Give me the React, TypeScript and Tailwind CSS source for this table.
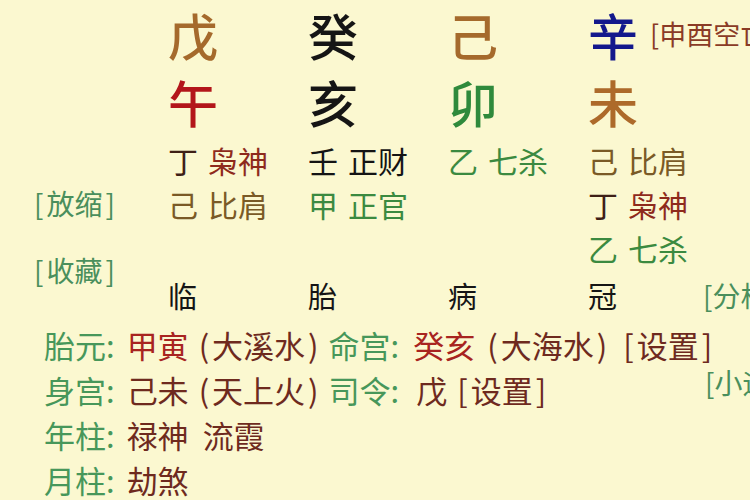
import React from 'react';

// 四柱列：天干、地支、藏干、长生
const columns = [
    { gan: '戊', ganColor: 'text-[#a56a2c]', zhi: '午', zhiColor: 'text-[#b3161a]', cs: '临' },
    { gan: '癸', ganColor: 'text-[#151515]', zhi: '亥', zhiColor: 'text-[#151515]', cs: '胎' },
    { gan: '己', ganColor: 'text-[#a56a2c]', zhi: '卯', zhiColor: 'text-[#2f8a3c]', cs: '病' },
    { gan: '辛', ganColor: 'text-[#13188c]', zhi: '未', zhiColor: 'text-[#ad6a2a]', cs: '冠' },
];

type Hidden = { stem: string; stemColor: string; god: string; godColor: string };

const hidden: Hidden[][] = [
    [
        { stem: '丁', stemColor: 'text-[#3e2016]', god: '枭神', godColor: 'text-[#8e2a1c]' },
        { stem: '己', stemColor: 'text-[#7a5a26]', god: '比肩', godColor: 'text-[#7a5a26]' },
    ],
    [
        { stem: '壬', stemColor: 'text-[#141414]', god: '正财', godColor: 'text-[#141414]' },
        { stem: '甲', stemColor: 'text-[#3b8a40]', god: '正官', godColor: 'text-[#3b8a40]' },
    ],
    [{ stem: '乙', stemColor: 'text-[#3b8a40]', god: '七杀', godColor: 'text-[#3b8a40]' }],
    [
        { stem: '己', stemColor: 'text-[#7a5a26]', god: '比肩', godColor: 'text-[#7a5a26]' },
        { stem: '丁', stemColor: 'text-[#3e2016]', god: '枭神', godColor: 'text-[#8e2a1c]' },
        { stem: '乙', stemColor: 'text-[#3b8a40]', god: '七杀', godColor: 'text-[#3b8a40]' },
    ],
];

const label = 'text-[#47975a]';
const red = 'text-[#a82420]';
const brown = 'text-[#6e2a1e]';

// 括号里的文字两边留点空
function Wrap({ open, close, children, gap = 'mx-[3px]' }: { open: string; close: string; children: React.ReactNode; gap?: string }) {
    return (
        <span className="inline-flex">
            {open}
            <span className={gap}>{children}</span>
            {close}
        </span>
    );
}

export default function App() {
    return (
        <div
            className="w-[750px] h-[500px] overflow-hidden bg-[#fbf8d0] whitespace-nowrap"
            style={{ fontFamily: '"Noto Sans CJK SC", "Noto Sans", sans-serif' }}
        >
            {/* 上半部分：左侧按钮 + 四柱 */}
            <div className="flex">
                <div className="w-[168px] shrink-0 pl-[34px] pt-[184px] text-[28px] leading-[38px] text-[#4a8f5c]">
                    <div><Wrap open="[" close="]">放缩</Wrap></div>
                    <div className="mt-[29px]"><Wrap open="[" close="]">收藏</Wrap></div>
                </div>

                <div className="flex">
                    {columns.map((c, i) => (
                        <div key={i} className="w-[140px] shrink-0 flex flex-col">
                            <div className="h-[67px] flex items-center text-[50px] font-medium leading-[60px]">
                                <span className={c.ganColor}>{c.gan}</span>
                                {i === 3 && (
                                    <span className="ml-[12px] text-[27px] font-normal leading-[36px] text-[#8a3b26]">[申酉空亡]</span>
                                )}
                            </div>
                            <div className="h-[67px] flex items-center text-[50px] font-medium leading-[60px]">
                                <span className={c.zhiColor}>{c.zhi}</span>
                            </div>
                            <div className="h-[136px] pt-[4px]">
                                {hidden[i].map((h, j) => (
                                    <div key={j} className="h-[44px] flex items-center text-[30px] leading-[40px]">
                                        <span className={h.stemColor}>{h.stem}</span>
                                        <span className={`ml-[10px] ${h.godColor}`}>{h.god}</span>
                                    </div>
                                ))}
                            </div>
                            <div className="h-[50px] flex items-center text-[29px] leading-[40px] text-[#151515]">
                                {c.cs}
                                {i === 3 && (
                                    <span className="ml-[86px] text-[28px] text-[#4a8f5c]">[分析]</span>
                                )}
                            </div>
                        </div>
                    ))}
                </div>
            </div>

            {/* 下半部分：胎元、命宫等信息 */}
            <div className="pl-[44px] pt-[2px] text-[31px] leading-[45px]">
                <div className="flex items-center">
                    <span className={label}>胎元:</span>
                    <span className={`ml-[12px] ${red}`}>甲寅</span>
                    <span className={`ml-[10px] ${brown}`}><Wrap open="(" close=")">大溪水</Wrap></span>
                    <span className={`ml-[10px] ${label}`}>命宫:</span>
                    <span className={`ml-[14px] ${red}`}>癸亥</span>
                    <span className={`ml-[12px] ${brown}`}><Wrap open="(" close=")">大海水</Wrap></span>
                    <span className={`ml-[16px] ${brown}`}><Wrap open="[" close="]">设置</Wrap></span>
                </div>
                <div className="flex items-center">
                    <span className={label}>身宫:</span>
                    <span className={`ml-[12px] ${brown}`}>己未</span>
                    <span className={`ml-[10px] ${brown}`}><Wrap open="(" close=")">天上火</Wrap></span>
                    <span className={`ml-[10px] ${label}`}>司令:</span>
                    <span className={`ml-[17px] ${brown}`}>戊</span>
                    <span className={`ml-[10px] ${brown}`}><Wrap open="[" close="]">设置</Wrap></span>
                    <span className="ml-auto w-[45px] shrink-0 overflow-hidden text-[28px] text-[#4a8f5c] -translate-y-[7px]">[小运]</span>
                </div>
                <div className="flex items-center">
                    <span className={label}>年柱:</span>
                    <span className={`ml-[12px] ${brown}`}>禄神</span>
                    <span className={`ml-[14px] ${brown}`}>流霞</span>
                </div>
                <div className="flex items-center">
                    <span className={label}>月柱:</span>
                    <span className={`ml-[12px] ${brown}`}>劫煞</span>
                </div>
            </div>
        </div>
    );
}
